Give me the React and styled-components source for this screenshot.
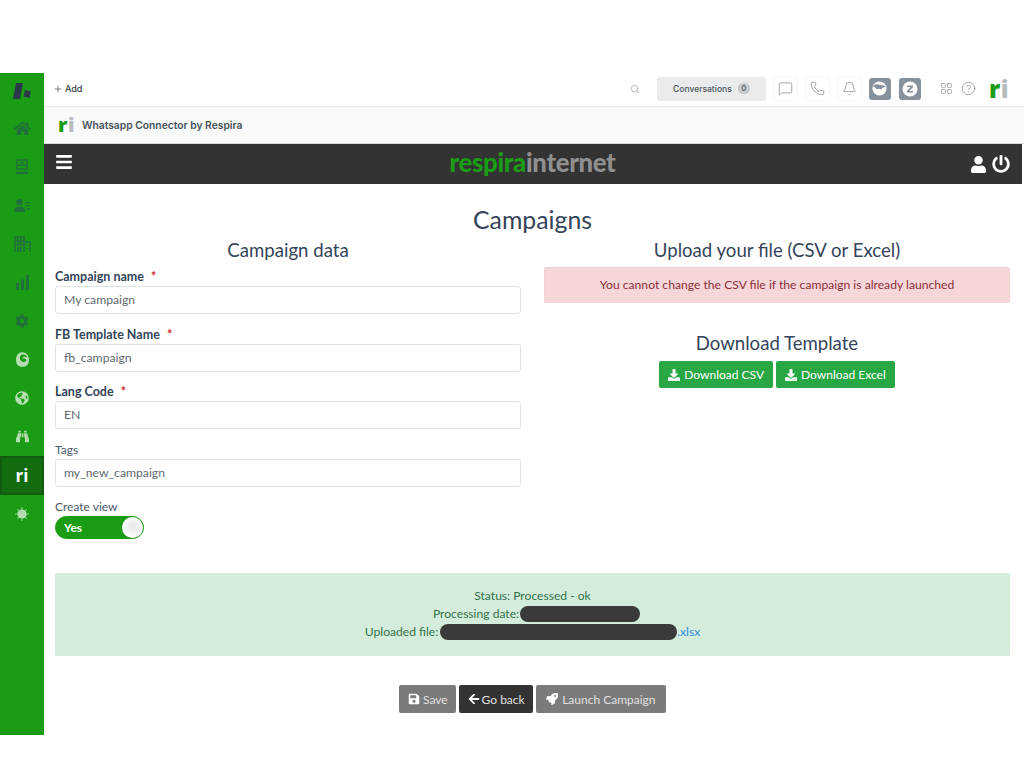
import React from 'react';
import styled, { createGlobalStyle } from 'styled-components';
import {
  FaHome, FaCog, FaBars, FaUser, FaPowerOff,
  FaDownload, FaSave, FaArrowLeft, FaRocket, FaBinoculars, FaGlobeAmericas,
} from 'react-icons/fa';
import { Search, MessageSquare, Phone, Bell, LayoutGrid, CircleHelp, Plus } from 'lucide-react';

const GlobalStyle = createGlobalStyle`
  html, body { margin: 0; padding: 0; background: #fff; }
  body { font-family: Lato, "Liberation Sans", sans-serif; color: #34445a; }
  * { box-sizing: border-box; }
`;

const Page = styled.div`
  padding-top: 73px;
  height: 768px;
  overflow: hidden;
`;

const Shell = styled.div`
  display: flex;
  height: 662px;
`;

const Sidebar = styled.nav`
  width: 44px;
  flex: none;
  background: #1a9c14;
  display: flex;
  flex-direction: column;
  align-items: stretch;
`;

const SideItem = styled.div`
  height: ${p => p.$h || 38.55}px;
  display: flex;
  align-items: center;
  justify-content: center;
  color: ${p => (p.$light ? '#b5dcb2' : '#22703a')};
  background: ${p => (p.$active ? '#146c11' : 'transparent')};
  border: ${p => (p.$active ? '2px solid #115c0e' : 'none')};
  font-family: "Open Sans", sans-serif;
  font-weight: 700;
  font-size: 17px;
  svg { display: block; }
  span { color: #fff; }
`;

const Main = styled.div`
  flex: 1;
  min-width: 0;
  display: flex;
  flex-direction: column;
`;

const TopBar = styled.header`
  height: 34px;
  flex: none;
  display: flex;
  align-items: center;
  padding: 0 15px 2px 9px;
  background: #fff;
  border-bottom: 1px solid #e9ebed;
  font-family: Inter, sans-serif;
`;

const AddLink = styled.div`
  display: flex;
  align-items: center;
  gap: 2px;
  font-size: 9px;
  font-weight: 500;
  color: #2f3941;
`;

const TopRight = styled.div`
  margin-left: auto;
  display: flex;
  align-items: center;
`;

const SearchIcon = styled(Search)`
  color: #a8adb2;
  margin-right: 17px;
`;

const ConvButton = styled.div`
  width: 109px;
  height: 24px;
  border-radius: 3px;
  background: #e9ebed;
  color: #49545c;
  font-size: 8.5px;
  font-weight: 500;
  display: flex;
  align-items: center;
  justify-content: center;
  gap: 6px;
  margin-right: 7px;
`;

const CountBadge = styled.span`
  width: 12px;
  height: 11px;
  border-radius: 6px;
  background: #c2c8cc;
  font-size: 7px;
  display: flex;
  align-items: center;
  justify-content: center;
`;

const IconBox = styled.div`
  width: 25px;
  height: 25px;
  border: 1px solid #f3f4f5;
  border-radius: 4px;
  display: flex;
  align-items: center;
  justify-content: center;
  color: #68737d;
  margin-right: 7px;
`;

const AppBox = styled.div`
  width: 22px;
  height: 22px;
  border-radius: 3px;
  background: #87929d;
  color: #fff;
  display: flex;
  align-items: center;
  justify-content: center;
  margin-right: ${p => p.$mr || 8}px;
`;

const PlainIcon = styled.div`
  color: #68737d;
  display: flex;
  margin-right: ${p => p.$mr || 0}px;
`;

const RiLogo = styled.div`
  font-family: "Open Sans", sans-serif;
  font-weight: 800;
  font-size: ${p => p.$size}px;
  line-height: 1;
  letter-spacing: 0.5px;
  color: #1a9c14;
  b { color: #b9bcbc; font-weight: 800; }
`;

const SubBar = styled.div`
  height: 37px;
  flex: none;
  display: flex;
  align-items: center;
  gap: 7px;
  padding: 0 0 0 14px;
  background: #f8f9f9;
  border-bottom: 1px solid #d8dcde;
  font-family: Inter, sans-serif;
  font-size: 10.3px;
  font-weight: 600;
  color: #49545c;
`;

const DarkNav = styled.div`
  height: 40px;
  flex: none;
  margin-right: 2px;
  padding: 0 12px;
  background: #333;
  color: #fff;
  display: grid;
  grid-template-columns: 1fr auto 1fr;
  align-items: center;
`;

const Hamburger = styled(FaBars)`
  margin: -5px 0 0 -1px;
`;

const Brand = styled.div`
  font-family: Lato, sans-serif;
  font-size: 25.700px;
  font-weight: 900;
  letter-spacing: -0.3px;
  line-height: 36px;
  margin: 0 1px 4px 0;
  color: #8f8f8f;
  span { color: #1a9c14; }
`;

const NavIcons = styled.div`
  display: flex;
  align-items: center;
  justify-content: flex-end;
  gap: 5px;
`;

const Content = styled.main`
  flex: 1;
  padding: 21px 14px 0 11px;
`;

const Title = styled.h1`
  margin: 0 0 5px;
  font-size: 24.800px;
  font-weight: 400;
  line-height: 29px;
  text-align: center;
`;

const Columns = styled.div`
  display: grid;
  grid-template-columns: 466px 466px;
  justify-content: space-between;
  height: 334px;
`;

const Heading = styled.h2`
  margin: 0;
  font-size: 18.600px;
  font-weight: 400;
  line-height: 22px;
  text-align: center;
`;

const Field = styled.div`
  margin-top: ${p => (p.$first ? 8 : 0)}px;
  height: 57.600px;
`;

const Label = styled.label`
  display: block;
  font-size: ${p => (p.$plain ? 12 : 12.5)}px;
  font-weight: ${p => (p.$plain ? 400 : 700)};
  line-height: 16px;
  margin-bottom: 1px;
  color: ${p => (p.$plain ? '#4b5a6b' : '#34445a')};
  em { color: #d9232e; font-style: normal; margin-left: 4px; }
`;

const Input = styled.div`
  height: 28px;
  border: 1px solid #dfe3e6;
  border-radius: 3px;
  padding: 0 8px;
  font-size: 12.200px;
  line-height: 26px;
  color: #5f6973;
`;

const Toggle = styled.div`
  width: 89px;
  height: 23px;
  border-radius: 12px;
  background: #1a9c14;
  border: 1px solid #1a9c14;
  color: #fff;
  font-size: 12px;
  font-weight: 700;
  line-height: 21px;
  padding-left: 8px;
  position: relative;
  margin-top: 1px;
`;

const Knob = styled.i`
  position: absolute;
  right: 0;
  top: 0;
  width: 21px;
  height: 21px;
  border-radius: 50%;
  background: radial-gradient(circle at 50% 45%, #e6e6e6, #fff 70%);
`;

const Alert = styled.div`
  margin-top: 6px;
  height: 36px;
  border: 1px solid #f5d0d4;
  border-radius: 2px;
  background: #f7d6d9;
  color: #8c2f39;
  font-size: 12.150px;
  line-height: 34px;
  text-align: center;
`;

const TemplateBox = styled.div`
  margin-top: 29px;
`;

const ButtonRow = styled.div`
  display: flex;
  justify-content: center;
  gap: 3px;
  margin-top: ${p => p.$mt || 7}px;
`;

const Button = styled.button`
  height: ${p => p.$h || 28}px;
  padding: 0 ${p => p.$pad || 9}px;
  border: 0;
  border-radius: 2px;
  background: ${p => p.$bg};
  color: ${p => p.$color || '#fff'};
  font: 400 12px Lato, sans-serif;
  display: inline-flex;
  align-items: center;
  gap: ${p => p.$gap || 4}px;
  svg { color: #fff; }
`;

const Status = styled.div`
  height: 83px;
  padding-top: 14px;
  border-radius: 2px;
  background: #d4ecdc;
  color: #33724c;
  font-size: 12.100px;
  line-height: 18px;
  text-align: center;
`;

const StatusLine = styled.div`
  display: flex;
  justify-content: center;
  align-items: center;
  padding-left: ${p => p.$indent || 0}px;
  a { color: #2b8cd9; text-decoration: none; }
`;

const Redacted = styled.span`
  display: inline-block;
  width: ${p => p.$w}px;
  height: 16px;
  margin-left: ${p => p.$ml || 1}px;
  border-radius: 8px;
  background: #3a3a3a;
`;

const GlobeApp = () => (
  <svg width="15" height="15" viewBox="0 0 16 16">
    <circle cx="8" cy="8" r="7.500" fill="#fff" />
    <path d="M1 6c2-3 4-3 7-2s5 0 7 2c-2 0-4 1-5 3-2-1-4-1-5 0-1-2-2-3-4-3z" fill="#87929d" />
  </svg>
);

const ZApp = () => (
  <svg width="16" height="16" viewBox="0 0 16 16">
    <circle cx="8" cy="8" r="7.500" fill="#fff" />
    <path d="M5 4.500h6v1.500L7.400 10H11v1.500H5V10l3.600-4H5z" fill="#87929d" />
  </svg>
);

const SideLogo = () => (
  <svg width="19" height="16" viewBox="0 0 19 16">
    <path d="M3 0h7L7 16H0z" fill="#2b3a4a" />
    <path d="M12 7l6 1.500-1.500 6.500-6-1.500z" fill="#2b3a4a" />
  </svg>
);

const TrayIcon = () => (
  <svg width="14" height="16" viewBox="0 0 14 16" fill="none" stroke="#22703a" strokeWidth="1.600">
    <path d="M2 1h10v9H2zM2 6h10M5 3.500h4" />
    <path d="M1 14h12" strokeWidth="2.600" />
  </svg>
);

const ContactIcon = () => (
  <svg width="16" height="13" viewBox="0 0 16 13" fill="#22703a">
    <circle cx="5.500" cy="3.300" r="3.200" />
    <path d="M0 13c0-4 2.500-5.500 5.500-5.500S11 9 11 13z" />
    <path d="M11 3h5v1.200h-5zM11 6h5v1.200h-5zM12.500 9H16v1.200h-3.500z" />
  </svg>
);

const BuildingIcon = () => (
  <svg width="17" height="16" viewBox="0 0 17 16" fill="none" stroke="#22703a" strokeWidth="1.600">
    <path d="M1 16V1h9v15M10 6h6v10M1 5h9M1 9h9M4 1v8M7 1v8M4 16v-4h3v4M13 9v1M13 12v1" />
  </svg>
);

const BarsIcon = () => (
  <svg width="13" height="15" viewBox="0 0 13 15" fill="#22703a">
    <rect x="0" y="8" width="3" height="7" rx="0.500" />
    <rect x="5" y="4.500" width="3" height="10.500" rx="0.500" />
    <rect x="10" y="0" width="3" height="15" rx="0.500" />
  </svg>
);

const MailchimpIcon = () => (
  <svg width="13" height="15" viewBox="0 0 15 17">
    <path d="M7 0c5 0 8 4 8 9s-3 8-8 8-7-4-7-8 2-9 7-9z" fill="#b5dcb2" />
    <path d="M6 3c3-1 6 0 7 3-2-1-5-1-6 1 2 0 5 0 5 3-2 2-5 2-6 0-2-2-2-5 0-7z" fill="#1a9c14" />
  </svg>
);

const SunIcon = () => (
  <svg width="14" height="14" viewBox="0 0 14 14" fill="#b5dcb2">
    <circle cx="7" cy="7" r="4.600" />
    <path d="M7 0v14M0 7h14M2 2l10 10M12 2L2 12" stroke="#b5dcb2" strokeWidth="0.800" />
  </svg>
);

const fields = [
  { label: 'Campaign name', value: 'My campaign', required: true },
  { label: 'FB Template Name', value: 'fb_campaign', required: true },
  { label: 'Lang Code', value: 'EN', required: true },
  { label: 'Tags', value: 'my_new_campaign' },
];

export default function App() {
  return (
    <Page>
      <GlobalStyle />
      <Shell>
        <Sidebar>
          <SideItem $h={36}><SideLogo /></SideItem>
          <SideItem><FaHome size={17} /></SideItem>
          <SideItem><TrayIcon /></SideItem>
          <SideItem><ContactIcon /></SideItem>
          <SideItem><BuildingIcon /></SideItem>
          <SideItem><BarsIcon /></SideItem>
          <SideItem><FaCog size={14} /></SideItem>
          <SideItem $light><MailchimpIcon /></SideItem>
          <SideItem $light><FaGlobeAmericas size={14} /></SideItem>
          <SideItem $light><FaBinoculars size={13} /></SideItem>
          <SideItem $active $h={39}><span>ri</span></SideItem>
          <SideItem $light><SunIcon /></SideItem>
        </Sidebar>
        <Main>
          <TopBar>
            <AddLink><Plus size={10} strokeWidth={1.5} /> Add</AddLink>
            <TopRight>
              <SearchIcon size={10} />
              <ConvButton>Conversations <CountBadge>0</CountBadge></ConvButton>
              <IconBox><MessageSquare size={15} strokeWidth={1} /></IconBox>
              <IconBox><Phone size={15} strokeWidth={1} /></IconBox>
              <IconBox><Bell size={15} strokeWidth={1} /></IconBox>
              <AppBox><GlobeApp /></AppBox>
              <AppBox $mr={19}><ZApp /></AppBox>
              <PlainIcon $mr={8}><LayoutGrid size={13} strokeWidth={1} /></PlainIcon>
              <PlainIcon $mr={13}><CircleHelp size={15} strokeWidth={1} /></PlainIcon>
              <RiLogo $size={24}>r<b>i</b></RiLogo>
            </TopRight>
          </TopBar>
          <SubBar>
            <RiLogo $size={20}>r<b>i</b></RiLogo>
            Whatsapp Connector by Respira
          </SubBar>
          <DarkNav>
            <Hamburger size={18} />
            <Brand><span>respira</span>internet</Brand>
            <NavIcons>
              <FaUser size={17} />
              <FaPowerOff size={18} />
            </NavIcons>
          </DarkNav>
          <Content>
            <Title>Campaigns</Title>
            <Columns>
              <div>
                <Heading>Campaign data</Heading>
                {fields.map((f, i) => (
                  <Field key={f.label} $first={i === 0}>
                    <Label $plain={!f.required}>
                      {f.label}{f.required && <em> *</em>}
                    </Label>
                    <Input>{f.value}</Input>
                  </Field>
                ))}
                <Label $plain>Create view</Label>
                <Toggle>Yes<Knob /></Toggle>
              </div>
              <div>
                <Heading>Upload your file (CSV or Excel)</Heading>
                <Alert>You cannot change the CSV file if the campaign is already launched</Alert>
                <TemplateBox>
                  <Heading>Download Template</Heading>
                  <ButtonRow>
                    <Button $bg="#28a745" $h={27}><FaDownload size={12} /> Download CSV</Button>
                    <Button $bg="#28a745" $h={27}><FaDownload size={12} /> Download Excel</Button>
                  </ButtonRow>
                </TemplateBox>
              </div>
            </Columns>
            <Status>
              <StatusLine>Status: Processed - ok</StatusLine>
              <StatusLine $indent={8}>Processing date:<Redacted $w={120} /></StatusLine>
              <StatusLine>Uploaded file:<Redacted $w={237} $ml={2} /><a href="#file">.xlsx</a></StatusLine>
            </Status>
            <ButtonRow $mt={29}>
              <Button $bg="#7b7b7b" $color="#e0e0e0" $gap={3} $pad={8.5}><FaSave size={12} /> Save</Button>
              <Button $bg="#333" $color="#e0e0e0" $gap={2} $pad={8.5}><FaArrowLeft size={12} /> Go back</Button>
              <Button $bg="#7b7b7b" $color="#e0e0e0" $pad={10}><FaRocket size={12} /> Launch Campaign</Button>
            </ButtonRow>
          </Content>
        </Main>
      </Shell>
    </Page>
  );
}
